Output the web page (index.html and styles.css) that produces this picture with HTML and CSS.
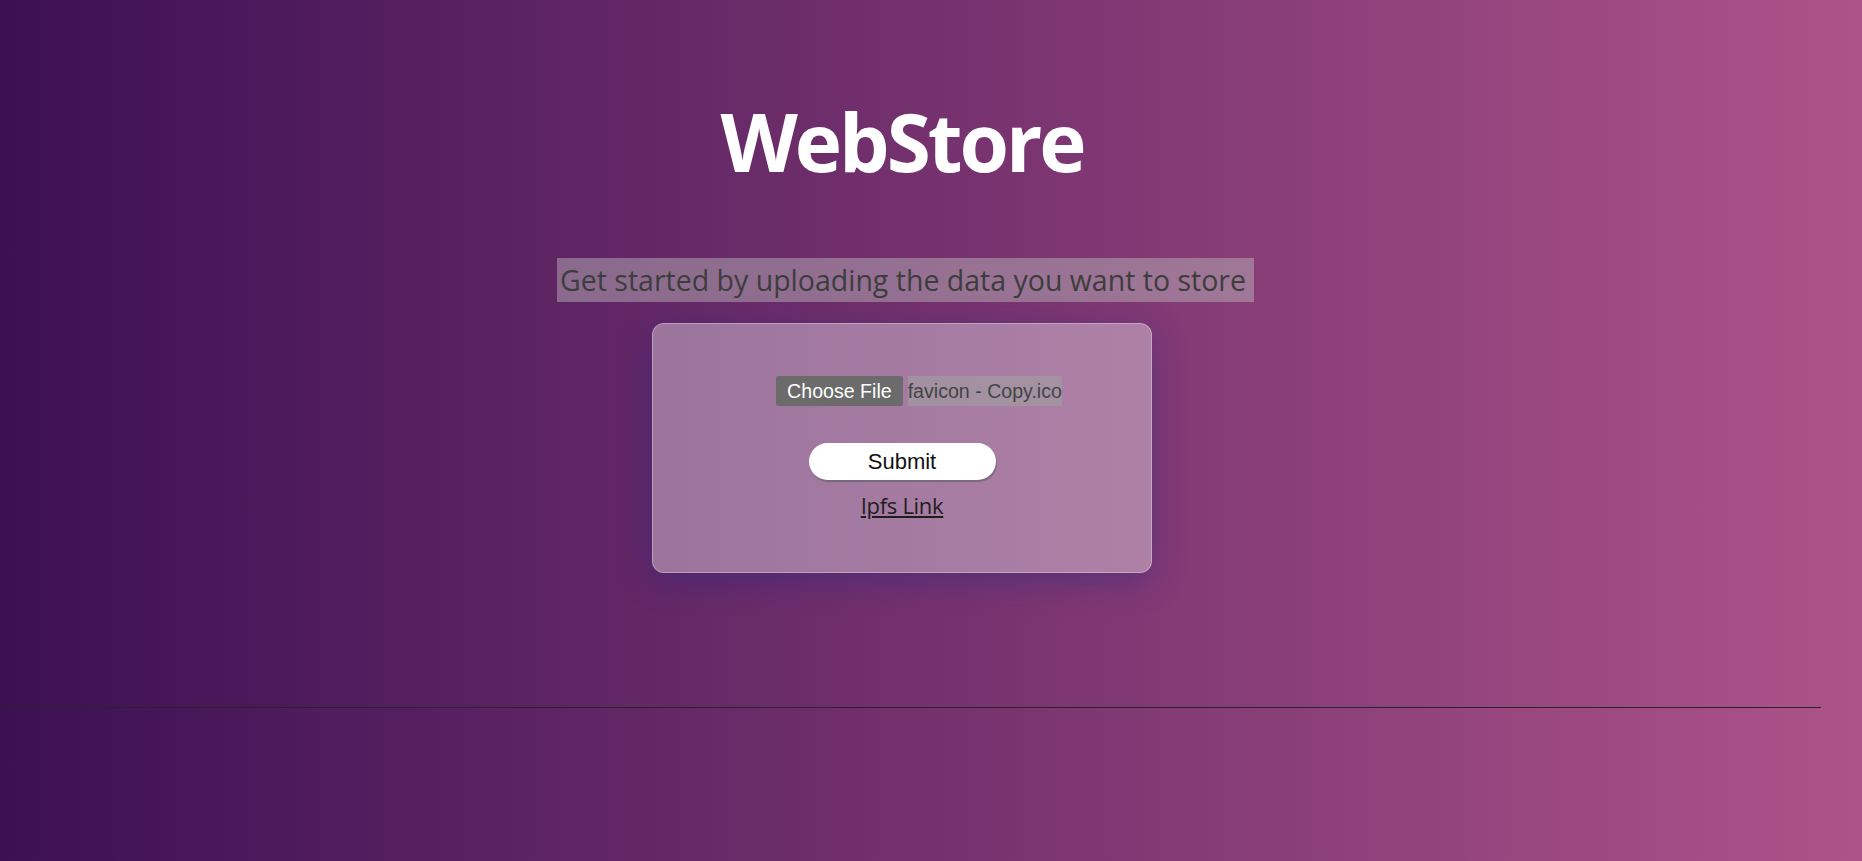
FILE: index.html
```html
<!DOCTYPE html>
<html lang="en">
<head>
<meta charset="utf-8">
<title>WebStore</title>
<link rel="stylesheet" href="styles.css">
</head>
<body>
  <main class="page">
    <h1 class="title">WebStore</h1>
    <p class="subtitle"><span class="subtitle-text">Get started by uploading the data you want to store</span></p>
    <form class="card">
      <div class="file-row">
        <label class="file-btn">Choose File</label>
        <span class="file-name">favicon - Copy.ico</span>
      </div>
      <button type="button" class="submit">Submit</button>
      <a class="ipfs-link" href="#">Ipfs Link</a>
    </form>
  </main>
  <hr class="rule">
</body>
</html>
```

FILE: styles.css
```css
html, body {
  margin: 0;
  padding: 0;
}

body {
  min-height: 100vh;
  background: linear-gradient(to right, #3c1053, #ad5389);
  font-family: "Open Sans", "Noto Sans", sans-serif;
  overflow: hidden;
}

.page {
  width: 1804px;
  display: flex;
  flex-direction: column;
  align-items: center;
}

.title {
  margin: 86px 0 0;
  font-size: 80px;
  font-weight: 700;
  line-height: 109px;
  color: #ffffff;
  letter-spacing: -3px;
}

.subtitle {
  margin: 63px 0 0 7px;
  line-height: 0;
}

.subtitle-text {
  display: inline-block;
  padding: 4px 8px 4px 3px;
  font-size: 28.5px;
  line-height: 36px;
  color: #3d3d3d;
  background: rgba(190, 190, 190, 0.45);
}

.card {
  margin-top: 21px;
  width: 500px;
  height: 250px;
  box-sizing: border-box;
  border: 1px solid rgba(255, 255, 255, 0.3);
  border-radius: 12px;
  background: rgba(255, 255, 255, 0.36);
  box-shadow: 0 8px 32px 0 rgba(31, 38, 135, 0.37);
  display: flex;
  flex-direction: column;
  align-items: center;
  padding-top: 52px;
}

.file-row {
  display: flex;
  align-items: stretch;
  gap: 5px;
  height: 30px;
  margin-left: 34px;
  font-family: "Liberation Sans", Arial, sans-serif;
  font-size: 19.6px;
}

.file-btn {
  display: flex;
  align-items: center;
  padding: 0 11px;
  background: #6b6b6b;
  color: #ffffff;
  border-radius: 2px;
}

.file-name {
  display: flex;
  align-items: center;
  color: #444444;
  background: rgba(160, 160, 160, 0.6);
}

.submit {
  margin-top: 37px;
  width: 187px;
  height: 37px;
  border: none;
  border-radius: 19px;
  background: #ffffff;
  box-shadow: 1px 2px 1px rgba(90, 90, 90, 0.55);
  font-family: "Liberation Sans", Arial, sans-serif;
  font-size: 22px;
  color: #111111;
  padding: 0;
}

.ipfs-link {
  margin-top: 10px;
  font-size: 22px;
  color: #1e1e1e;
  text-decoration: underline;
  letter-spacing: -0.3px;
}

.rule {
  width: 1821px;
  margin: 134px 0 0;
  border: 0;
  border-top: 1px solid #262626;
  height: 0;
}
```
